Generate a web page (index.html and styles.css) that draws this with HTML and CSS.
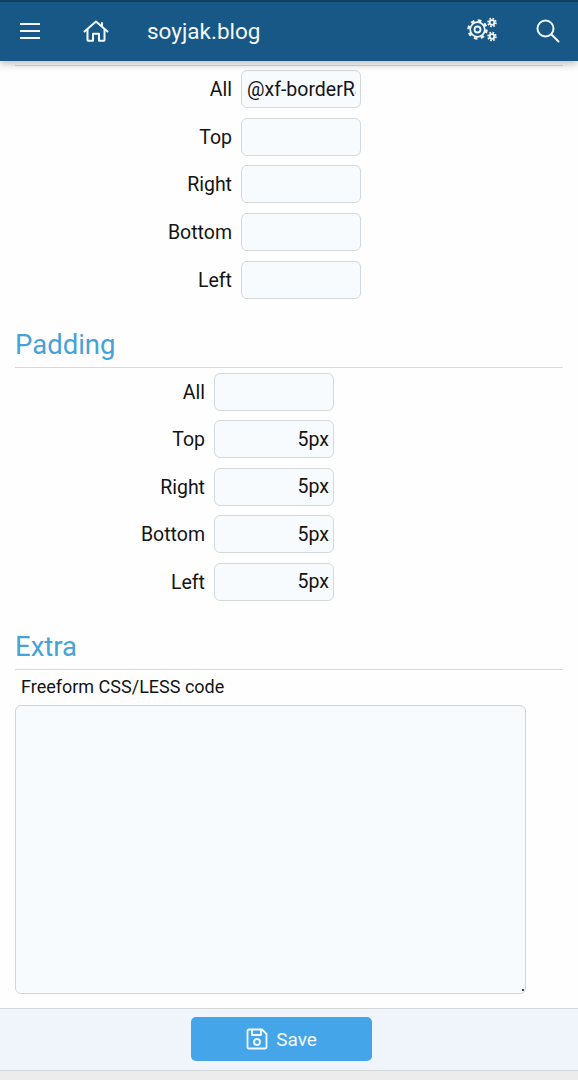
FILE: index.html
```html
<!DOCTYPE html>
<html lang="en">

<head>
    <meta charset="utf-8">
    <link rel="stylesheet" href="styles.css">
    <title>soyjak.blog</title>
</head>

<body>
    <header class="topbar">
        <button class="icon-btn menu-btn" aria-label="menu">
            <svg width="22" height="18" viewBox="0 0 22 18" fill="none" stroke="currentColor" stroke-width="2.2">
                <path d="M1 2h20M1 9h20M1 16h20" />
            </svg>
        </button>
        <button class="icon-btn home-btn" aria-label="home">
            <svg width="26" height="22" viewBox="0 0 26 22" fill="none" stroke="currentColor" stroke-width="2"
                stroke-linejoin="round" stroke-linecap="round">
                <path d="M1.500 11.500 13 1.500l11.500 10" />
                <path d="M4.500 9.500V20a.8.8 0 0 0 .8.8H10v-7h6v7h4.700a.8.8 0 0 0 .8-.8V9.500" />
                <path d="M19 3v3" />
            </svg>
        </button>
        <span class="site-name">soyjak.blog</span>
        <button class="icon-btn gear-btn" aria-label="options">
            <svg width="31" height="28" viewBox="0 0 31 28" fill="none" stroke="currentColor">
                <circle cx="10.500" cy="12.500" r="9" stroke-dasharray="3.600 3.470" stroke-width="2.400" />
                <circle cx="10.500" cy="12.500" r="7.300" stroke-width="1.700" />
                <circle cx="10.500" cy="12.500" r="3" stroke-width="1.800" />
                <circle cx="25" cy="5.500" r="2.300" stroke-width="1.800" />
                <circle cx="25" cy="5.500" r="3.900" stroke-dasharray="1.700 1.360" stroke-width="1.800" />
                <circle cx="25" cy="19.500" r="2.300" stroke-width="1.800" />
                <circle cx="25" cy="19.500" r="3.900" stroke-dasharray="1.700 1.360" stroke-width="1.800" />
            </svg>
        </button>
        <button class="icon-btn search-btn" aria-label="search">
            <svg width="24" height="24" viewBox="0 0 24 24" fill="none" stroke="currentColor" stroke-width="2"
                stroke-linecap="round">
                <circle cx="9.500" cy="9.500" r="8" />
                <path d="m15.500 15.500 7 7" />
            </svg>
        </button>
    </header>

    <main class="content">
        <section class="group group-border">
            <div class="row"><label>All</label><input type="text" value="@xf-borderRadiusMedium"></div>
            <div class="row"><label>Top</label><input type="text"></div>
            <div class="row"><label>Right</label><input type="text"></div>
            <div class="row"><label>Bottom</label><input type="text"></div>
            <div class="row"><label>Left</label><input type="text"></div>
        </section>

        <h2 class="heading heading-padding">Padding</h2>
        <section class="group group-padding">
            <div class="row"><label>All</label><input type="text"></div>
            <div class="row"><label>Top</label><input type="text" class="num" value="5px"></div>
            <div class="row"><label>Right</label><input type="text" class="num" value="5px"></div>
            <div class="row"><label>Bottom</label><input type="text" class="num" value="5px"></div>
            <div class="row"><label>Left</label><input type="text" class="num" value="5px"></div>
        </section>

        <h2 class="heading heading-extra">Extra</h2>
        <p class="code-label">Freeform CSS/LESS code</p>
        <div class="code-wrap">
            <textarea class="code-box"></textarea>
        </div>
    </main>

    <footer class="savebar">
        <button class="save-btn">
            <svg width="22" height="22" viewBox="0 0 22 22" fill="none" stroke="currentColor" stroke-width="1.800"
                stroke-linejoin="round">
                <path d="M3 1.500h13l4.500 4.500v13a1.500 1.500 0 0 1-1.500 1.500H3A1.500 1.500 0 0 1 1.500 19V3A1.500 1.500 0 0 1 3 1.500z" />
                <path d="M6 1.500v5.500h9V1.500" />
                <circle cx="11" cy="14" r="3" />
            </svg>
            Save
        </button>
    </footer>
    <div class="page-end"></div>
</body>

</html>
```

FILE: styles.css
```css
* {
    margin: 0;
    padding: 0;
    box-sizing: border-box;
    font-family: Roboto, "Liberation Sans", sans-serif;
}

body {
    background-color: #fefefe;
    color: #141414;
    height: 1080px;
    overflow: hidden;
}

.topbar {
    height: 61px;
    display: flex;
    align-items: center;
    background-color: #185886;
    border-top: 2px solid #12405f;
    color: #f3f8fb;
    box-shadow: 0 3px 8px rgba(0, 0, 0, 0.25);
    padding-bottom: 2px;
    position: relative;
}

.icon-btn {
    border: 0;
    background: none;
    color: inherit;
    display: flex;
}

.menu-btn {
    margin-left: 19px;
}

.home-btn {
    margin-left: 42px;
}

.site-name {
    font-size: 22.500px;
    margin-left: 38px;
    flex: 1;
}

.gear-btn {
    margin-right: 38px;
}

.search-btn {
    margin-right: 18px;
}

.content {
    padding: 4px 15px 0;
    height: 947px;
}

.group {
    display: flex;
    flex-direction: column;
    gap: 9.500px;
    padding-top: 5px;
}

.group-border {
    border-top: 1px solid #d5d9dc;
    padding-top: 4px;
    gap: 9.700px;
}

.row {
    display: flex;
    align-items: center;
    gap: 9px;
}

.row label {
    font-size: 19.500px;
    text-align: right;
    padding-top: 1px;
}

.group-border label {
    width: 217px;
}

.group-padding label {
    width: 190px;
}

.row input {
    width: 120px;
    height: 38px;
    border: 1px solid #d3d8dd;
    border-radius: 6px;
    background-color: #f8fbfe;
    padding: 0 4px 0 5px;
    font-size: 19.500px;
    color: #141414;
}

.row input.num {
    text-align: right;
}

.heading {
    font-size: 27.500px;
    font-weight: 400;
    color: #47a2d8;
    border-bottom: 1px solid #d5d9dc;
    line-height: 36px;
    padding-bottom: 4px;
}

.heading-padding {
    margin-top: 28px;
}

.heading-extra {
    margin-top: 28px;
}

.code-label {
    font-size: 18px;
    padding: 7px 6px 0;
    line-height: 20px;
}

.code-wrap {
    position: relative;
    width: 511px;
    margin-top: 8px;
}

.code-wrap::after {
    content: "";
    position: absolute;
    right: 2px;
    bottom: 3px;
    width: 2px;
    height: 2px;
    background-color: #444;
}

.code-box {
    display: block;
    width: 511px;
    height: 289px;
    border: 1px solid #cfd4d9;
    border-radius: 6px;
    background-color: #f8fbfe;
    resize: none;
}

.savebar {
    height: 63px;
    background-color: #eff5fb;
    border-top: 1px solid #d5d9dc;
    border-bottom: 1px solid #d5d9dc;
    padding: 8px 0 0 191px;
}

.save-btn {
    width: 181px;
    height: 44px;
    display: flex;
    align-items: center;
    justify-content: center;
    gap: 8px;
    border: 0;
    border-radius: 5px;
    background-color: #45a5e9;
    color: #f3f9fd;
    font-size: 19px;
}

.page-end {
    height: 10px;
    background-color: #ececec;
}
```
